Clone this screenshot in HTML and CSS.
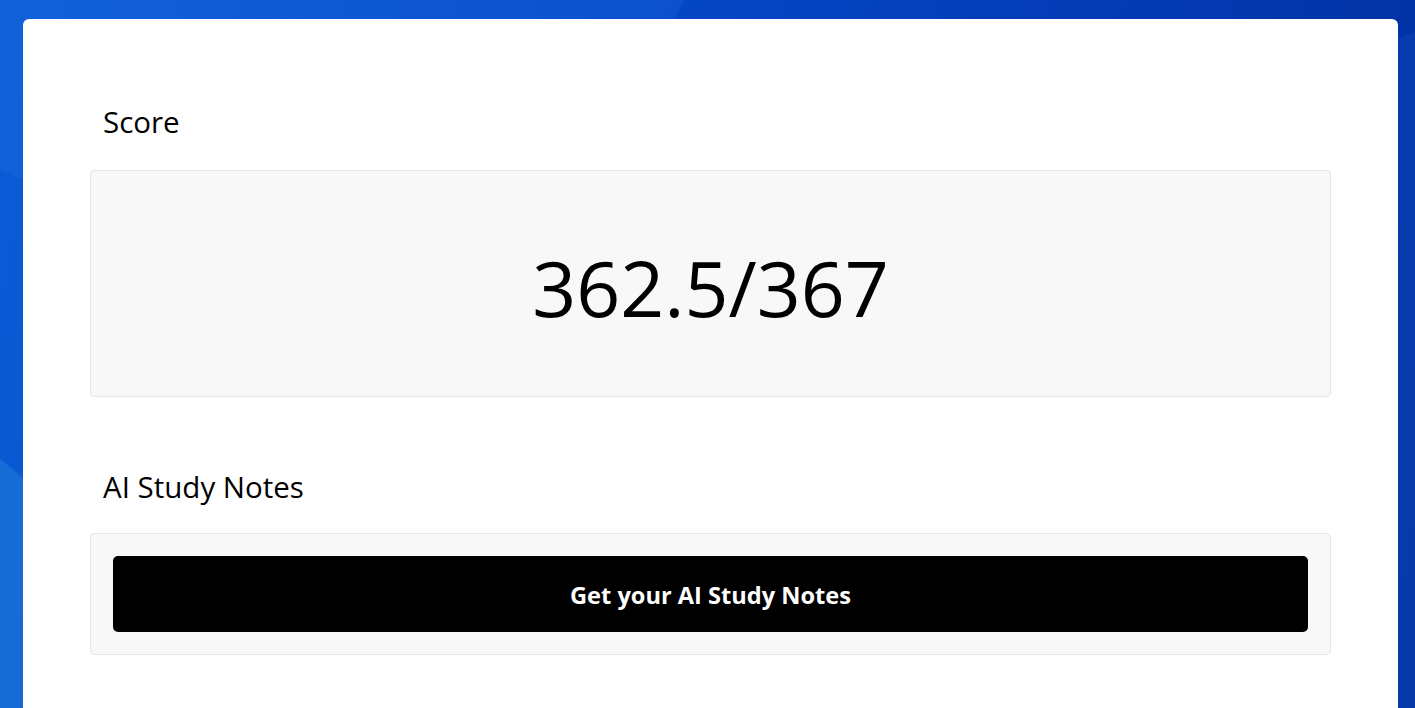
FILE: index.html
```html
<!DOCTYPE html>
<html lang="en">
<head>
<meta charset="utf-8">
<title>Score</title>
<link rel="stylesheet" href="styles.css">
</head>
<body>
<div class="bg">
  <div class="shape shape-a"></div>
  <div class="shape shape-b"></div>
  <div class="shape shape-c"></div>
</div>
<main class="card">
  <section class="section section-score">
    <h2 class="label">Score</h2>
    <div class="panel score-panel">
      <div class="score">362.5/367</div>
    </div>
  </section>
  <section class="section section-notes">
    <h2 class="label">AI Study Notes</h2>
    <div class="panel notes-panel">
      <button class="btn" type="button">Get your AI Study Notes</button>
    </div>
  </section>
</main>
</body>
</html>
```
FILE: styles.css
```css
html, body {
  margin: 0;
  height: 100%;
}
body {
  position: relative;
  overflow: hidden;
  background: linear-gradient(100deg, #0a5cd6 0%, #0548c8 40%, #0338b0 80%, #0230a0 100%);
  font-family: "Open Sans", "Noto Sans", sans-serif;
  color: #000;
  padding: 19px 17px 0 23px;
  box-sizing: border-box;
}
.bg {
  position: absolute;
  inset: 0;
  z-index: 0;
  overflow: hidden;
}
.shape {
  position: absolute;
}
.shape-a {
  left: -200px;
  top: -380px;
  width: 900px;
  height: 600px;
  border-radius: 50%;
  background: rgba(40, 120, 230, 0.22);
}
.shape-b {
  left: -220px;
  top: 560px;
  width: 500px;
  height: 500px;
  background: rgba(40, 130, 220, 0.45);
  transform: rotate(40deg);
}
.shape-c {
  right: -240px;
  top: 40px;
  width: 400px;
  height: 700px;
  background: rgba(20, 80, 190, 0.3);
  transform: rotate(-20deg);
}
.card {
  position: relative;
  z-index: 1;
  background: #fff;
  border-radius: 6px 6px 0 0;
  height: 100%;
  padding: 0 67px;
  box-sizing: border-box;
}
.section-score {
  padding-top: 83px;
}
.section-notes {
  padding-top: 70px;
}
.label {
  margin: 0;
  padding-left: 13px;
  font-size: 29.5px;
  font-weight: 400;
  line-height: 40px;
}
.panel {
  background: #f8f8f8;
  border: 1px solid #e6e6e6;
  border-radius: 4px;
}
.section-score .label {
  margin-bottom: 28px;
}
.section-notes .label {
  margin-bottom: 26px;
}
.score-panel {
  height: 225px;
  display: flex;
  align-items: center;
  justify-content: center;
}
.score {
  font-size: 77px;
  line-height: 1;
  padding-top: 8px;
}
.notes-panel {
  padding: 22px;
}
.btn {
  display: block;
  width: 100%;
  height: 76px;
  border: 0;
  border-radius: 5px;
  background: #000;
  color: #fff;
  font-family: "Open Sans", "Noto Sans", sans-serif;
  font-size: 23.6px;
  font-weight: 700;
  padding-top: 2px;
  cursor: pointer;
}
```
